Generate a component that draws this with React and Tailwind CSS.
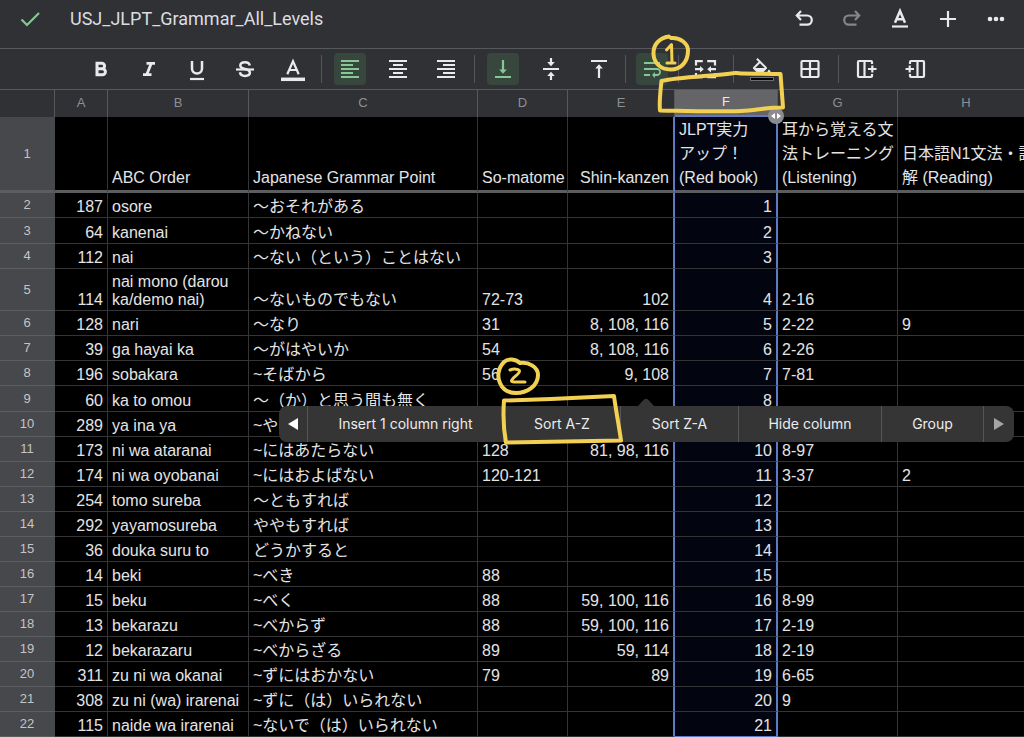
import React from "react";
import {
  MdFormatAlignCenter,
  MdFormatAlignLeft,
  MdFormatAlignRight,
  MdWrapText,
} from "react-icons/md";

const columns = ["A", "B", "C", "D", "E", "F", "G", "H"];

const headings = [
  "",
  "ABC Order",
  "Japanese Grammar Point",
  "So-matome",
  "Shin-kanzen",
  "JLPT実力\nアップ！\n(Red book)",
  "耳から覚える文\n法トレーニング\n(Listening)",
  "日本語N1文法・読\n解 (Reading)",
];

const rows = [
  ["187", "osore", "〜おそれがある", "", "", "1", "", ""],
  ["64", "kanenai", "〜かねない", "", "", "2", "", ""],
  ["112", "nai", "〜ない（という）ことはない", "", "", "3", "", ""],
  ["114", "nai mono (darou\nka/demo nai)", "〜ないものでもない", "72-73", "102", "4", "2-16", ""],
  ["128", "nari", "〜なり", "31", "8, 108, 116", "5", "2-22", "9"],
  ["39", "ga hayai ka", "〜がはやいか", "54", "8, 108, 116", "6", "2-26", ""],
  ["196", "sobakara", "~そばから", "56", "9, 108", "7", "7-81", ""],
  ["60", "ka to omou", "〜（か）と思う間も無く", "", "", "8", "", ""],
  ["289", "ya ina ya", "~や", "", "", "", "", ""],
  ["173", "ni wa ataranai", "~にはあたらない", "128", "81, 98, 116", "10", "8-97", ""],
  ["174", "ni wa oyobanai", "~にはおよばない", "120-121", "", "11", "3-37", "2"],
  ["254", "tomo sureba", "〜ともすれば", "", "", "12", "", ""],
  ["292", "yayamosureba", "ややもすれば", "", "", "13", "", ""],
  ["36", "douka suru to", "どうかすると", "", "", "14", "", ""],
  ["14", "beki", "~べき", "88", "", "15", "", ""],
  ["15", "beku", "~べく", "88", "59, 100, 116", "16", "8-99", ""],
  ["13", "bekarazu", "~べからず", "88", "59, 100, 116", "17", "2-19", ""],
  ["12", "bekarazaru", "~べからざる", "89", "59, 114", "18", "2-19", ""],
  ["311", "zu ni wa okanai", "~ずにはおかない", "79", "89", "19", "6-65", ""],
  ["308", "zu ni (wa) irarenai", "~ずに（は）いられない", "", "", "20", "9", ""],
  ["115", "naide wa irarenai", "~ないで（は）いられない", "", "", "21", "", ""],
];

function Icon({ children, strokeWidth = 2.2 }) {
  return (
    <svg
      viewBox="0 0 24 24"
      className="size-6 overflow-visible"
      fill="none"
      stroke="currentColor"
      strokeWidth={strokeWidth}
      aria-hidden="true"
    >
      {children}
    </svg>
  );
}

function ToolButton({ label, active, dim, children }) {
  const color = active
    ? "bg-[#37473d] text-[#86c796]"
    : dim
      ? "text-[#85868a]"
      : "text-[#e8eaed]";
  return (
    <button
      type="button"
      aria-label={label}
      className={`flex size-8 shrink-0 items-center justify-center rounded ${color}`}
    >
      {children}
    </button>
  );
}

function Separator({ tight }) {
  return <div className={`h-7 w-px shrink-0 bg-[#55565a] ${tight ? "mx-2.5" : "mx-3"}`} />;
}

function TopBar() {
  return (
    <header className="flex h-12 items-center justify-between pb-2.5 pr-3 pl-[18px]">
      <div className="flex items-center gap-7">
        <button type="button" aria-label="Done" className="text-[#86c796]">
          <Icon>
            <path d="M3.5 12.5 9 18 21 6" />
          </Icon>
        </button>
        <h1 className="font-[Roboto,sans-serif] text-lg text-[#dcdde0]">
          USJ_JLPT_Grammar_All_Levels
        </h1>
      </div>
      <div className="flex gap-4">
        <ToolButton label="Undo">
          <Icon>
            <path d="M9 4 4.8 8.5 9 13M5 8.500h10.200a4.600 4.600 0 0 1 0 9.200H7.500" />
          </Icon>
        </ToolButton>
        <ToolButton label="Redo" dim>
          <Icon>
            <path d="M15 4l4.200 4.500L15 13M19 8.500H8.800a4.600 4.600 0 0 0 0 9.200h7.700" />
          </Icon>
        </ToolButton>
        <ToolButton label="Format">
          <Icon>
            <path d="M7 15.800 12 4l5 11.800M8.800 12.300h6.400" strokeWidth="2.5" />
            <path d="M4 19.500h16" />
          </Icon>
        </ToolButton>
        <ToolButton label="Insert">
          <Icon>
            <path d="M12 4v16M4 12h16" />
          </Icon>
        </ToolButton>
        <ToolButton label="More">
          <Icon>
            <g fill="currentColor" stroke="none">
              <circle cx="6" cy="12" r="2.3" />
              <circle cx="12" cy="12" r="2.3" />
              <circle cx="18" cy="12" r="2.3" />
            </g>
          </Icon>
        </ToolButton>
      </div>
    </header>
  );
}

function Toolbar() {
  return (
    <div className="flex h-[42px] items-center border-y border-[#57585c] pl-[85px]">
      <div className="flex gap-4">
        <ToolButton label="Bold">
          <Icon strokeWidth={3}>
            <path d="M8 6.300h4.800a2.750 2.750 0 0 1 0 5.500H8zM8 11.800h5.400a3 3 0 0 1 0 6H8z" />
          </Icon>
        </ToolButton>
        <ToolButton label="Italic">
          <Icon strokeWidth={2.8}>
            <path d="M9.500 6.300H18M6 17.700h8.500M14.300 6.300 9.700 17.700" />
          </Icon>
        </ToolButton>
        <ToolButton label="Underline">
          <Icon>
            <path d="M7 4v7.500a5 5 0 0 0 10 0V4" strokeWidth="2.500" />
            <path d="M5 22h14" />
          </Icon>
        </ToolButton>
        <ToolButton label="Strikethrough">
          <Icon>
            <path
              d="M16.800 8.500C16.400 6.400 14.600 5.200 12 5.200c-2.900 0-4.700 1.400-4.700 3.300 0 1.800 1.400 2.800 4.700 3.500s4.900 1.700 4.900 3.600-2 3.300-4.900 3.300c-2.800 0-4.700-1.300-5.100-3.600"
              strokeWidth="2.500"
            />
            <path d="M3 12.500h18" />
          </Icon>
        </ToolButton>
        <ToolButton label="Text colour">
          <Icon>
            <path d="M6.300 17.200 12 4.300l5.700 12.900M8.500 13h7" />
            <path d="M0 22.300h24" strokeWidth="3.500" />
          </Icon>
        </ToolButton>
      </div>
      <Separator />
      <div className="flex gap-4">
        <ToolButton label="Align left" active>
          <MdFormatAlignLeft size={24} />
        </ToolButton>
        <ToolButton label="Align centre">
          <MdFormatAlignCenter size={24} />
        </ToolButton>
        <ToolButton label="Align right">
          <MdFormatAlignRight size={24} />
        </ToolButton>
      </div>
      <Separator />
      <div className="flex gap-4">
        <ToolButton label="Align bottom" active>
          <Icon>
            <path d="M4 20h16M12 3v11" />
            <path d="M8.200 12.500h7.600L12 16.800z" fill="currentColor" stroke="none" />
          </Icon>
        </ToolButton>
        <ToolButton label="Align middle">
          <Icon>
            <path d="M4 12h16M12 1v5M12 23v-5" />
            <path d="M8.200 5h7.600L12 9.300zM8.200 19h7.600L12 14.700z" fill="currentColor" stroke="none" />
          </Icon>
        </ToolButton>
        <ToolButton label="Align top">
          <Icon>
            <path d="M4 4h16M12 21V10" />
            <path d="M8.200 11.500h7.600L12 7.200z" fill="currentColor" stroke="none" />
          </Icon>
        </ToolButton>
      </div>
      <Separator tight />
      <ToolButton label="Wrap text" active>
        <MdWrapText size={24} />
      </ToolButton>
      <Separator tight />
      <ToolButton label="Merge cells">
        <Icon>
          <path d="M9.800 4.200H3v4.300M14.200 4.200H22v4.300M9.800 20.200H3v-4.300M14.200 20.200H22v-4.300M2 12.200h6M23 12.200h-6" />
          <path d="M7 8.900v6.600l3.800-3.300zM18 8.900v6.600l-3.800-3.300z" fill="currentColor" stroke="none" />
        </Icon>
      </ToolButton>
      <Separator />
      <div className="flex gap-4">
        <ToolButton label="Fill colour">
          <Icon>
            <path
              d="M16.560 8.940 7.620 0 6.210 1.410l2.380 2.380-5.150 5.150a1.490 1.490 0 0 0 0 2.120l5.500 5.500c.290.290.680.440 1.060.440s.770-.150 1.060-.440l5.500-5.500c.590-.580.590-1.530 0-2.120zM5.210 10 10 5.210 14.790 10H5.210zM19 11.500s-2 2.170-2 3.500c0 1.100.9 2 2 2s2-.9 2-2c0-1.330-2-3.500-2-3.500z"
              fill="currentColor"
              stroke="none"
              transform="translate(0 1)"
            />
            <rect x="0.5" y="20.5" width="23" height="3" fill="#000" stroke="#6b6c70" strokeWidth="1" />
          </Icon>
        </ToolButton>
        <ToolButton label="Borders">
          <Icon>
            <rect x="3.500" y="4" width="17" height="16" rx="1" />
            <path d="M12 4v16M3.500 12h17" />
          </Icon>
        </ToolButton>
      </div>
      <Separator />
      <div className="flex gap-4">
        <ToolButton label="Insert column right">
          <Icon>
            <path d="M17 7V5a1 1 0 0 0-1-1H4a1 1 0 0 0-1 1v14a1 1 0 0 0 1 1h12a1 1 0 0 0 1-1v-2M9.500 4v16M13 12h8.500M17.300 8.500v7" />
          </Icon>
        </ToolButton>
        <ToolButton label="Insert column left">
          <Icon>
            <path d="M7 7V5a1 1 0 0 1 1-1h12a1 1 0 0 1 1 1v14a1 1 0 0 1-1 1H8a1 1 0 0 1-1-1v-2M14.500 4v16M11 12H2.500M6.700 8.500v7" />
          </Icon>
        </ToolButton>
      </div>
    </div>
  );
}

function RowNumber({ first, children }) {
  return (
    <th
      scope="row"
      className={`border-r border-r-[#47484b] bg-[#47484b] p-0 text-[13px] leading-[18px] font-normal text-[#c4c5c8] ${
        first ? "border-b-3 border-b-[#5c5d60]" : "border-b border-b-[#5c5d60]"
      }`}
    >
      {children}
    </th>
  );
}

function Cell({ column, children, first, last }) {
  const numeric = column === 0 || column === 4 || column === 5;
  const selected = column === 5;
  let look = "border-r border-r-[#353537]";
  if (column === 4) look = "border-r-2 border-r-[#5f7ac4]";
  if (selected) look = "border-r-2 border-r-[#5f7ac4] bg-[#02050f]";

  let bottom = "border-b border-b-[#353537] leading-[18px] pb-px";
  if (first) bottom = "border-b-3 border-b-[#5c5d60] leading-6";
  if (last && selected) bottom = "border-b border-b-[#5f7ac4] leading-[18px] pb-px";

  return (
    <td
      className={`px-1 align-bottom whitespace-pre ${look} ${bottom} ${
        numeric && !(first && selected) ? "text-right" : "text-left"
      }`}
    >
      {children}
    </td>
  );
}

function Sheet() {
  return (
    <table className="w-[1035px] table-fixed border-separate border-spacing-0 bg-black text-base text-[#e4e4e6]">
      <colgroup>
        <col className="w-[55px]" />
        <col className="w-[53px]" />
        <col className="w-[141px]" />
        <col className="w-[229px]" />
        <col className="w-[90px]" />
        <col className="w-[107px]" />
        <col className="w-[103px]" />
        <col className="w-[120px]" />
        <col className="w-[137px]" />
      </colgroup>
      <thead>
        <tr className="h-[27px] text-[13px] text-[#8e8f92]">
          <td className="border-r border-[#57585c] bg-[#303135]" />
          {columns.map((name) => (
            <th
              key={name}
              scope="col"
              className={`border-r border-[#57585c] p-0 pb-0.5 font-normal ${
                name === "F"
                  ? "border-b-2 border-b-[#5f7ac4] bg-[#656568] text-[#e8eaed]"
                  : "bg-[#303135]"
              }`}
            >
              {name}
            </th>
          ))}
        </tr>
      </thead>
      <tbody>
        <tr className="h-[76px]">
          <RowNumber first>1</RowNumber>
          {headings.map((text, i) => (
            <Cell key={i} column={i} first>
              {text}
            </Cell>
          ))}
        </tr>
        {rows.map((row, r) => {
          let height = "h-[25px]";
          if (r === 1 || r === 7) height = "h-[26px]";
          if (r === 3) height = "h-[42px]";
          return (
            <tr key={r} className={height}>
              <RowNumber>{r + 2}</RowNumber>
              {row.map((text, i) => (
                <Cell key={i} column={i} last={r === rows.length - 1}>
                  {text}
                </Cell>
              ))}
            </tr>
          );
        })}
      </tbody>
    </table>
  );
}

function ContextMenu() {
  const item = "border-r border-[#55555a] text-center";
  return (
    <div className="absolute top-[316px] right-[10px] left-[279px]">
      {/* pointer towards the selected header */}
      <svg viewBox="0 0 18 9" className="absolute -top-2 left-[358px] h-[9px] w-[18px]" aria-hidden="true">
        <path d="M0 9 7 1.500Q9 0 11 1.500L18 9z" fill="#353536" />
      </svg>
      <div className="grid h-9 grid-cols-[29fr_196fr_117fr_118fr_143fr_102fr_30fr] overflow-hidden rounded-lg bg-[#353536] font-[Inter,sans-serif] text-sm text-[#ececee]">
        <button type="button" aria-label="Previous" className={`${item} flex items-center justify-center`}>
          <svg viewBox="0 0 10 12" className="h-3 w-2.5" fill="#fff">
            <path d="M10 0v12L0 6z" />
          </svg>
        </button>
        <button type="button" className={item}>Insert 1 column right</button>
        <button type="button" className={item}>Sort A-Z</button>
        <button type="button" className={item}>Sort Z-A</button>
        <button type="button" className={item}>Hide column</button>
        <button type="button" className={item}>Group</button>
        <button type="button" aria-label="Next" className="flex items-center justify-center">
          <svg viewBox="0 0 10 12" className="h-3 w-2.5" fill="#a5a5a8">
            <path d="M0 0v12l10-6z" />
          </svg>
        </button>
      </div>
    </div>
  );
}

// hand drawn marks for the two steps
function Marks() {
  return (
    <div className="pointer-events-none text-[#f2d052]">
      <svg
        viewBox="650 30 145 90"
        className="absolute top-[30px] left-[650px] h-[90px] w-[145px]"
        fill="none"
        stroke="currentColor"
        strokeWidth="4"
        strokeLinecap="round"
        strokeLinejoin="round"
        aria-hidden="true"
      >
        <path d="M669 36.500C659 38 653 45 653.500 54c.5 9 7 15.500 17 15.500 11 0 17.500-8 17.500-19 0-7-8-13.500-17-12.500" />
        <path d="M666.500 50l5-5.500.5 18M667 63h8" strokeWidth="3" />
        <path d="M661.500 81c18-4 52-5 73-8 3-.500 5 .5 8 .5 12 0 25 .5 38 .5l2.500 33.500c-14-.5-28 3-42 3.500-27 1-54 0-81-.500-1-9 .5-20 1.500-29.500" />
      </svg>
      <svg
        viewBox="490 350 140 100"
        className="absolute top-[350px] left-[490px] h-[100px] w-[140px]"
        fill="none"
        stroke="currentColor"
        strokeWidth="4"
        strokeLinecap="round"
        strokeLinejoin="round"
        aria-hidden="true"
      >
        <path d="M520 363c-4-4-12-5-16-1-6 6-7 15-4 21 3 7 9 10 16 10 11 0 22-7 22-18 0-8-9-13-18-12" />
        <path d="M510 370c4-1.500 9-1 9.500 1 .5 3-8 7-8 10 0 1.500 8 1 13.500 1" strokeWidth="3" />
        <path d="M504 400.500c36-1 73-2.500 110-4.500 2 15 5 30 7 44.500-38 .5-76 1-115 2-2.500-13-3-28-2-42z" />
      </svg>
    </div>
  );
}

export default function App() {
  return (
    <div className="relative h-screen overflow-hidden bg-[#303135] font-['Liberation_Sans','Noto_Sans_CJK_JP',sans-serif]">
      <TopBar />
      <Toolbar />
      <main className="relative">
        <Sheet />
        {/* column resize handle */}
        <button
          type="button"
          aria-label="Resize column"
          className="absolute top-[18px] left-[768px] flex size-4 items-center justify-center rounded-full bg-[#8c8c8f]"
        >
          <svg viewBox="0 0 10 6" className="h-1.5 w-2.5" fill="#fff">
            <path d="M4 0v6L0 3zM6 0v6l4-3z" />
          </svg>
        </button>
        <ContextMenu />
      </main>
      <Marks />
    </div>
  );
}
